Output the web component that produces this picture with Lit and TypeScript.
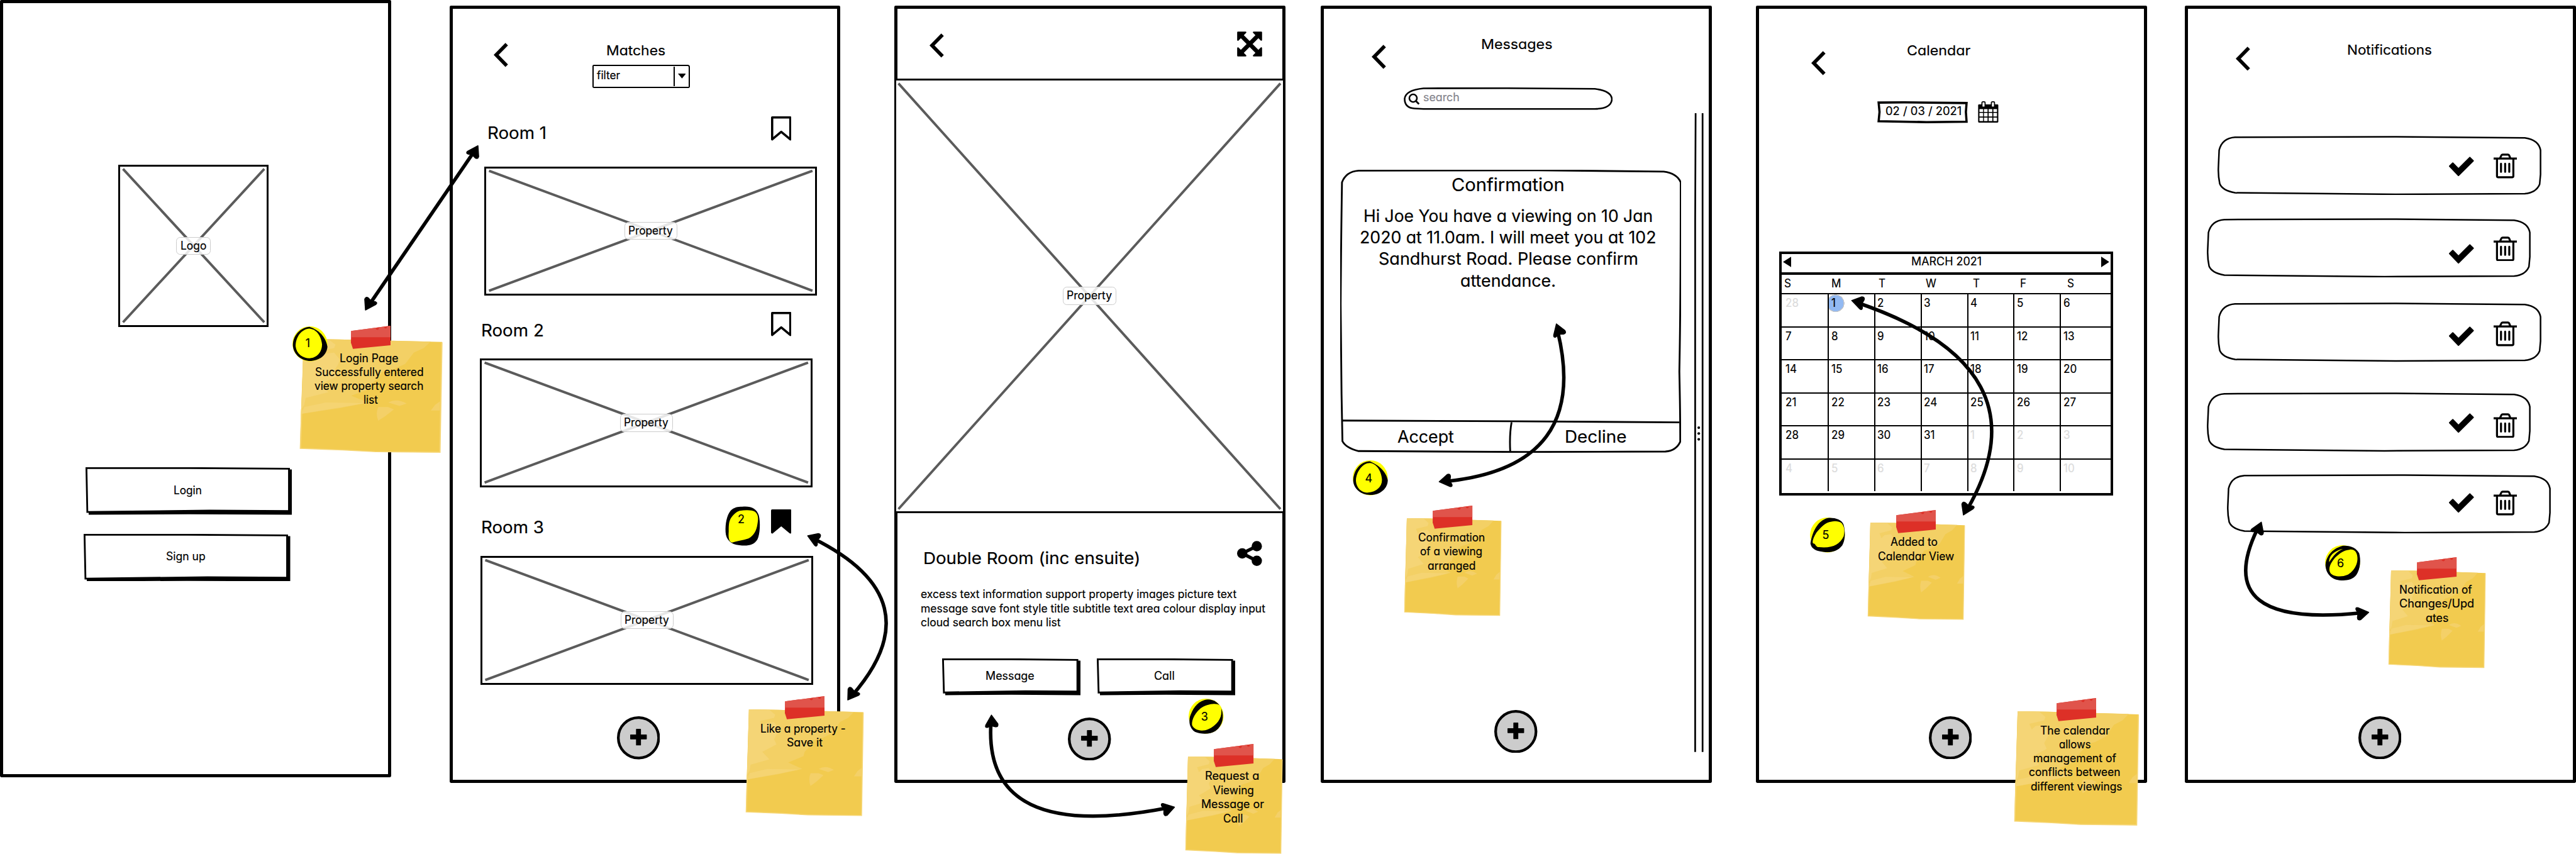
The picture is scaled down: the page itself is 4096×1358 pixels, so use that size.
import { LitElement, html, svg, css, nothing } from "lit";
import { customElement, property } from "lit/decorators.js";

/** One line of lettering, condensed horizontally to the hand-lettered width. */
@customElement("sk-text")
class SkText extends LitElement {
  @property({ type: Number }) w = 0;
  @property({ type: Number }) size = 25.2;
  @property({ type: Number }) line = 31.6;
  static styles = css`
    :host { display: block; flex: none; white-space: nowrap; }
    .run { display: inline-block; transform-origin: 0 50%; vertical-align: top; }
  `;
  render() {
    return html`<span class="run"><slot></slot></span>`;
  }
  updated() {
    const run = this.renderRoot.querySelector(".run") as HTMLElement;
    this.style.fontSize = `${this.size}px`;
    this.style.lineHeight = `${this.line}px`;
    run.style.transform = "none";
    if (!this.w) {
      run.style.transform = "scaleX(0.95)";
      return;
    }
    this.style.width = `${this.w}px`;
    const natural = run.getBoundingClientRect().width;
    const wanted = this.getBoundingClientRect().width;
    if (natural > 0) run.style.transform = `scaleX(${wanted / natural})`;
  }
}

/** Crossed-out picture placeholder with a caption chip. */
@customElement("wire-image")
class WireImage extends LitElement {
  @property({ type: Number }) w = 741;
  @property({ type: Number }) h = 287.4;
  @property() label = "Property";
  @property({ type: Number }) lw = 99;
  static styles = css`
    :host { display: block; flex: none; }
    .frame { display: grid; place-items: center; box-sizing: border-box; width: 100%; height: 100%; border: 5px solid #000; background: #fff; }
    .frame > * { grid-area: 1 / 1; }
    .chip { padding: 3px 8px 3px; border: 2px solid #ccc; border-radius: 9px; background: rgba(255, 255, 255, 0.85); z-index: 1; }
    svg { display: block; }
  `;
  render() {
    const w = this.w - 10, h = this.h - 10;
    return html`<div class="frame">
      <svg width=${w} height=${h} stroke="#5b5b5b" stroke-width="5.5">
        <path d="M5 5L${w - 5} ${h - 5}M${w - 5} 5L5 ${h - 5}"></path>
      </svg>
      <div class="chip"><sk-text .w=${this.lw}>${this.label}</sk-text></div>
    </div>`;
  }
  updated() {
    this.style.width = `${this.w}px`;
    this.style.height = `${this.h}px`;
  }
}

/** Hand-drawn push button with a heavy right and bottom edge. */
@customElement("wire-button")
class WireButton extends LitElement {
  @property({ type: Number }) w = 308.6;
  @property({ type: Number }) h = 82;
  @property() label = "";
  @property({ type: Number }) lw = 60;
  static styles = css`
    :host { display: block; flex: none; }
    .btn { display: grid; place-items: center; }
    .btn > * { grid-area: 1 / 1; }
    .label { padding: 0 6px 3px 0; }
    svg { display: block; }
  `;
  render() {
    const { w, h } = this;
    return html`<div class="btn">
      <svg width=${w} height=${h}>
        <path d="M7 ${h - 9}H${w - 9}V5H${w}V${h}L${w * 0.5} ${h - 1}L7 ${h}Z" fill="#000"></path>
        <path d="M2 2L${w * 0.5} 1.8L${w - 7} 3.4V${h - 8}L${w * 0.6} ${h - 9}L4 ${h - 6}Z" fill="#fff" stroke="#000" stroke-width="4"></path>
      </svg>
      <div class="label"><sk-text .w=${this.lw}>${this.label}</sk-text></div>
    </div>`;
  }
}

type Line = [text: string, width: number, shift?: number];

/** Taped yellow sticky note. */
@customElement("sticky-note")
class StickyNote extends LitElement {
  @property({ attribute: false }) lines: Line[] = [];
  @property({ type: Number }) w = 216;
  @property({ type: Number }) h = 216;
  @property({ type: Number }) pitch = 31.6;
  static styles = css`
    :host { display: block; }
    .note { position: relative; }
    .paper { position: absolute; inset: 0; width: 100%; height: 100%; overflow: visible; }
    .tape { position: absolute; top: -28.5px; left: calc(50% - 44.5px); }
    .words { position: relative; display: flex; flex-direction: column; align-items: center; padding: 28px 7px 0 0; }
  `;
  render() {
    return html`<div class="note" style="width:${this.w}px;height:${this.h}px">
      <svg class="paper" viewBox="0 0 100 100" preserveAspectRatio="none">
        <path d="M2.6 0L27 .4L100 2.7L98.4 100L53 99.3L30 97.8L0 96.4L.6 70Z" fill="#f2cb4f"></path>
        <path d="M2.6 0L27 .4L92 2.4L87 8L80 12L74 22L65 27L58 29L55 34L50 40L49 44L36 50L48 56L28 61L1 66L.6 70L1.6 40Z" fill="#f3d065"></path>
        <path d="M2.6 0L20 .4L25 5L24 8L12 11L14 16L17 13L24 12L28 18L27 22L24 28L26 33L14 40L20 47L4 52L3 58L1 62L1.6 40Z" fill="#f5d576"></path>
        <path d="M3 60L18 56L46 56.5L30 60L1 66Z" fill="#f5d576" opacity=".8"></path>
        <path d="M55 60L62 60L66 62L60 68L55 72Q53 66 55 60Z" fill="#f4d068"></path>
        <path d="M62 56Q68 52 75 57L70 59Z" fill="#f4d068"></path>
        <path d="M98.5 55L95 58L92 63L98.3 63Z" fill="#f4d068"></path>
        <path d="M1.2 62L.3 96.4L30 97.8L53 99.3L98.4 99.8L99.8 3" fill="none" stroke="#f6d675" stroke-width=".9"></path>
      </svg>
      <svg class="tape" width="89" height="52">
        <path d="M0.5 11.5L88.5 0V43.5L4.5 51.5L0 38Z" fill="#dd3027"></path>
        <path d="M0.5 11.5L88.5 0V25.5H0Z" fill="#e0544b"></path>
        <path d="M55 6q4-2 8-1q-1 4-4 4q-3 0-4-3zM74 3q3-2 7-1q-1 4-4 4q-2 0-3-3z" fill="#dd3027"></path>
      </svg>
      <div class="words">
        ${this.lines.map(([t, w, dx]) => html`<sk-text .w=${w} .line=${this.pitch} style="margin-left:${2 * (dx ?? 0)}px">${t}</sk-text>`)}
      </div>
    </div>`;
  }
}

const chevron = html`<svg class="back" width="32" height="54" fill="none" stroke="#000" stroke-width="8">
  <path d="M29 3L5.500 27L29 51"></path></svg>`;

const plus = html`<svg class="fab" width="96" height="96">
  <circle cx="48" cy="48" r="45" fill="#ccc" stroke="#000" stroke-width="6"></circle>
  <path d="M30.500 41.500h35v9h-35zM43.500 29h9v35h-9z" stroke="#000" stroke-width="2" stroke-linejoin="round"></path></svg>`;

const bookmark = (filled = false) => html`<svg width="45.500" height="54" stroke="#000" stroke-width="5" stroke-linejoin="round"
  fill=${filled ? "#000" : "none"}><path d="M2.500 2.500H43V51.300L22.700 34.500L2.500 51.300Z"></path></svg>`;

const expandIcon = html`<svg width="56" height="56" stroke="#000" stroke-linejoin="round">
  <path d="M9 9L47 47M47 9L9 47" stroke-width="9.500"></path>
  <path d="M2 2H19L2 19ZM54 2V19L37 2ZM2 54V37L19 54ZM54 54H37L54 37Z" stroke-width="3.500"></path></svg>`;

const shareIcon = html`<svg width="56" height="56"><path d="M43.500 12L11.500 28L43.500 44.500" fill="none" stroke="#000" stroke-width="7.500"></path>
  <circle cx="44" cy="12" r="11.500"></circle><circle cx="11.500" cy="28" r="11.500"></circle><circle cx="44" cy="44.500" r="11.500"></circle></svg>`;

const calendarIcon = html`<svg width="46" height="48">
  <path d="M2.500 7H43.500Q45.500 7 45.500 9V46Q45.500 47.500 43.500 47.500H2.500Q.5 47.500 .5 46V9Q.5 7 2.500 7Z"></path>
  <g fill="#fff"><path d="M3.500 17.500h8v6.500h-8zM13.500 17.500h8v6.500h-8zM24 17.500h8v6.500h-8zM34.500 17.500h8v6.500h-8z"></path>
  <path d="M3.500 26h8v8h-8zM13.500 26h8v8h-8zM24 26h8v8h-8zM34.500 26h8v8h-8z"></path>
  <path d="M3.500 36.500h8v7.500h-8zM13.500 36.500h8v7.500h-8zM24 36.500h8v7.500h-8zM34.500 36.500h8v7.500h-8z"></path></g>
  <g fill="#fff" stroke="#000" stroke-width="2.500"><rect x="9" y="1.300" width="7" height="12" rx="2"></rect><rect x="30" y="1.300" width="7" height="12" rx="2"></rect></g></svg>`;

const checkIcon = html`<svg width="56" height="44" stroke="#000" stroke-width="3" stroke-linejoin="round">
  <path d="M1.500 21.500L8.500 14.500L21.200 27.500L46.500 2L54 9.500L21.200 42Z"></path></svg>`;

const trashIcon = html`<svg width="52" height="56" fill="none" stroke="#000" stroke-width="4.500" stroke-linejoin="round">
  <path d="M0 11.500H52M14.500 10L17.500 4Q18.500 2.500 20 2.500H32Q33.500 2.500 34.500 4L37 10M7.500 11.500V50Q7.500 53 10.500 53H41Q44 53 44 50V11.500"></path>
  <path d="M16.500 23V41M25.700 23V41M34.900 23V41" stroke-linecap="round"></path></svg>`;

const badges = [
  { n: "1", x: 652, y: 727, tx: 34, ty: 38, black: "M38 1C20 2 1 18 1 42C2 64 22 78 42 77C62 75 76 64 78 46C76 32 66 10 38 1Z", inner: "M38 5C20 6 7 24 7 44C9 62 24 71 38 71C54 70 66 58 66 40C64 24 56 7 38 5Z", disc: true },
  { n: "2", x: 1616, y: 1128, tx: 36, ty: 29, black: "M38 1C56-1 70 4 75 20C79 36 78 62 72 74C64 88 48 89 32 87C12 86 2 74 1 58C0 38 4 20 12 10C20 2 28 1 38 1Z", inner: "M32 10C46 8 60 8 66 12C75 18 74 30 72 40C70 54 64 66 52 72C40 76 24 78 16 81C8 80 7 68 8 56C8 44 8 36 12 28C18 18 26 12 32 10Z" },
  { n: "3", x: 2650, y: 1557, tx: 35, ty: 41, black: "M35 3C50-1 66 6 73 22C80 40 76 60 60 72C48 80 28 80 14 74C2 66 0 52 3 40C8 24 18 8 35 3Z", inner: "M70 15C60 8 40 12 26 22C10 36 6 52 8 60C14 71 30 74 44 68C62 60 74 44 73 28C73 22 73 18 70 15Z", disc: true },
  { n: "4", x: 3016, y: 1026, tx: 35, ty: 40, black: "M38 2C18 2 1 22 1 46C2 64 20 78 40 77C62 77 78 62 78 44C76 32 66 14 38 2Z", inner: "M38 6C22 6 7 26 7 46C8 62 20 73 34 72C54 70 66 58 65 42C64 26 54 7 38 6Z", disc: true },
  { n: "5", x: 4035, y: 1154, tx: 34.500, ty: 39, black: "M40 1C56 0 70 4 75 16C79 30 79 50 72 62C62 75 48 78 34 77C14 76 3 70 1 58C4 36 16 6 40 1Z", inner: "M48 9C34 10 22 24 14 34C8 44 4 54 7 58C12 56 12 66 20 66C50 69 66 60 75 42C78 30 77 20 70 12C64 8 56 7 48 9Z", disc: true },
  { n: "6", x: 5182, y: 1215, tx: 35, ty: 41, black: "M40 1C56 0 70 6 76 18C80 32 79 52 70 66C60 79 44 79 32 78C12 76 1 60 1 44C2 26 14 8 40 1Z", inner: "M54 10C64 8 71 14 72 26C74 44 62 60 50 66C36 72 18 70 12 62C6 52 12 40 22 28C32 18 42 11 54 10ZM9 38C8 24 20 12 40 8C26 14 18 24 9 38Z", disc: true },
];

const notes: { x: number; y: number; w: number; h: number; lines: Line[]; pitch?: number }[] = [
  { x: 668, y: 755, w: 317, h: 253, lines: [["Login Page", 131], ["Successfully entered", 242], ["view property search", 243], ["list", 32, 3]], pitch: 31 },
  { x: 1663, y: 1581, w: 262, h: 237, lines: [["Like a property -", 190], ["Save it", 80, 3]] },
  { x: 2642.500, y: 1687, w: 216, h: 216, lines: [["Request a", 121], ["Viewing", 91, 2], ["Message or", 140], ["Call", 44, 2]] },
  { x: 3130.500, y: 1155, w: 216, h: 217, lines: [["Confirmation", 149], ["of a viewing", 139], ["arranged", 107]] },
  { x: 4163, y: 1165, w: 216, h: 216, lines: [["Added to", 105, -1], ["Calendar View", 170, 3]] },
  { x: 4490, y: 1585, w: 277, h: 254, lines: [["The calendar", 155], ["allows", 71], ["management of", 185], ["conflicts between", 204], ["different viewings", 204, 3]], pitch: 31.200 },
  { x: 5324.500, y: 1271, w: 216, h: 217, lines: [["Notification of", 162], ["Changes/Upd", 167, 3], ["ates", 51, 3]] },
];

const arrows = [
  { d: "M1056 339L824 678", a: [1066, 324, -55.600], b: [814, 692, 124.400] },
  { d: "M1812 1200Q2087 1336 1899 1551", a: [1799.500, 1194, 206.500], b: [1889, 1561, 130] },
  { d: "M2209 1610Q2190 1881 2602 1801", a: [2210, 1593, -88], b: [2619, 1799, -10] },
  { d: "M3472 738Q3546 1040 3224 1073", a: [3469, 721, -104], b: [3207, 1074, 176] },
  { d: "M4141 675Q4566 820 4386 1134", a: [4126.500, 669.500, 198.500], b: [4376, 1149, 120] },
  { d: "M5031 1181Q4925 1402 5264 1366", a: [5041, 1163, -63], b: [5281, 1365, -4] },
];

const arrowHead = ([x, y, deg]: number[]) =>
  svg`<path transform="translate(${x} ${y}) rotate(${deg})" d="M-1 0L-24 -12Q-30 -14 -29 -8L-25 0L-27 10Q-27 17 -20 15Z" stroke="#000" stroke-width="2" stroke-linejoin="round"/>`;

const dow = ["S", "M", "T", "W", "T", "F", "S"];
const days = [28, ...Array.from({ length: 31 }, (_, i) => i + 1), ...Array.from({ length: 10 }, (_, i) => i + 1)];

/** Left margin, top margin, tick left, tick top and bin top of each notification card. */
const cards = [
  [66, 145, 516, 46, 39],
  [42, 52, 540, 57, 40],
  [66, 56.500, 516, 53, 42],
  [42, 68.500, 540, 46, 45],
  [86.500, 49, 495.500, 42, 36.500],
];

@customElement("app-root")
class AppRoot extends LitElement {
  static styles = css`
    :host { display: block; width: 4096px; height: 1358px; overflow: hidden; background: #fff; color: #000;
      font-family: Inter, "Liberation Sans", sans-serif; font-weight: 400; font-feature-settings: "cv11" 1;
      -webkit-text-stroke: 0.3px currentColor; }
    svg { display: block; flex: none; }
    .board { position: relative; width: 5742px; height: 1904px; zoom: 0.71334; overflow: hidden; }
    .screens { display: flex; align-items: flex-start; }
    .screen { flex: none; display: flex; flex-direction: column; align-items: flex-start; box-sizing: border-box;
      width: 871.5px; height: 1733px; margin-top: 13px; border: 8px solid #000; border-radius: 3px; }
    .head { display: flex; align-items: flex-start; }

    .screen.login { margin-top: 0; }
    .login .logo { margin: 360px 0 0 257px; }
    .login .signin { margin: 313px 0 0 183.5px; }
    .login .signup { margin: 42px 0 0 179.5px; }

    .matches { margin-left: 130.5px; }
    .matches .head { padding: 73px 0 0 92px; gap: 187px; }
    .matches .back { margin-top: 3px; }
    .matches .heading { margin: 0 0 11px 31px; }
    .combo { display: flex; align-items: center; justify-content: space-between; box-sizing: border-box; width: 218px; height: 52px;
      padding-left: 7px; border: 4px solid #000; border-radius: 3px 5px 3px 3px; }
    .combo .drop { display: grid; place-items: center; width: 31px; height: 44px; border-left: 4px solid #000; }
    .combo sk-text { margin-bottom: 3px; }
    .room { display: flex; align-items: flex-start; justify-content: space-between; align-self: stretch; height: 54px; padding-right: 103px; }
    .room1 { margin-top: 64px; padding-left: 78px; }
    .room1 sk-text { margin-top: 15px; }
    .room2 { margin-top: 37px; padding-left: 64px; }
    .room2 sk-text { margin-top: 19px; }
    .room3 { margin-top: 49.5px; padding-left: 64px; }
    .room3 sk-text { margin-top: 18px; }
    .pic1 { margin: 57px 0 0 71px; }
    .pic2 { margin: 49.5px 0 0 61px; }
    .pic3 { margin: 49px 0 0 62.5px; }
    .matches .fab { margin: 71px 0 0 366px; }

    .detail { margin-left: 120.5px; }
    .detail .head { align-self: stretch; justify-content: space-between; box-sizing: border-box; height: 155.3px; padding: 49.5px 44.5px 0 70.7px; }
    .detail .back { margin-top: 5px; }
    .hero { margin-left: -8px; }
    .detail .titlebar { display: flex; align-items: flex-start; justify-content: space-between; align-self: stretch;
      margin-top: 60.7px; padding: 0 44.5px 0 57px; }
    .titlebar sk-text { margin-top: 17.4px; }
    .blurb { margin: 43.3px 0 0 51px; }
    .actions { display: flex; gap: 35.5px; margin: 63.4px 0 0 99.4px; }
    .detail .fab { margin: 48.8px 0 0 380px; }

    .messages { margin-left: 78.5px; }
    .messages .head { padding: 59px 0 0 106.4px; gap: 212px; }
    .messages .back { margin-top: 21px; }
    .search { display: grid; align-items: center; width: 466px; height: 50px; margin: 41px 0 0 178px; }
    .search > * { grid-area: 1 / 1; }
    .search sk-text { margin: 0 0 5px 43px; color: #85858d; }
    .feed { display: flex; margin-top: 7.5px; }
    .alert { display: grid; width: 760px; height: 631px; margin: 126px 0 0 36.5px; }
    .alert > * { grid-area: 1 / 1; }
    .alert .content { display: flex; flex-direction: column; align-items: center; padding-top: 11px; }
    .alert .copy { display: flex; flex-direction: column; align-items: center; margin-top: 21px; }
    .alert .content > sk-text, .alert .copy { margin-right: 11px; }
    .choices { display: grid; grid-template-columns: 1fr 1fr; justify-items: center; align-self: stretch; margin-top: auto; height: 58px; }
    .messages .fab { margin: 573px 0 0 380px; }
    .scroll { margin-left: 29.5px; }

    .agenda { margin-left: 98.5px; }
    .agenda .head { padding: 72.7px 0 0 116.6px; gap: 180.5px; }
    .agenda .back { margin-top: 21.3px; }
    .date { display: flex; align-items: flex-start; gap: 22.4px; margin: 57.5px 0 0 264px; }
    .datebox { display: grid; grid-template-columns: 202px; align-items: center; height: 49px; }
    .datebox > * { grid-area: 1 / 1; }
    .datebox sk-text { margin: 0 0 3px 18.5px; }
    .month { box-sizing: border-box; width: 745.2px; height: 543.5px; margin: 286.5px 0 0 44.3px; border: 6px solid #000; }
    .monthbar { display: flex; justify-content: space-between; height: 40px; padding: 0 3px; border-bottom: 6px solid #000; }
    .monthbar svg { margin-top: 6px; }
    .dow { display: grid; grid-template-columns: repeat(7, 105.1px); height: 41.2px; padding-left: 6px; }
    .days { display: grid; grid-template-columns: 103.1px repeat(5, 103.5px) 1fr; grid-auto-rows: 73.6px; }
    .day { display: flex; align-items: flex-start; padding-left: 5px; border-top: 3.6px solid #000; border-left: 3.6px solid #000; }
    .day.first { border-left: none; padding-left: 9px; }
    .day.out { color: #dcdcdc; }
    .day.today { background: radial-gradient(circle at 15px 20px, #92b9f2 17.5px, #c4c6ca 18px 19.4px, transparent 19.8px); }
    .agenda .fab { margin: 491.8px 0 0 378px; }

    .alerts { margin-left: 84.5px; }
    .alerts .head { padding: 71.7px 0 0 106.4px; gap: 216px; }
    .alerts .back { margin-top: 11.8px; }
    .card { display: grid; width: 722px; height: 132px; }
    .card > * { grid-area: 1 / 1; }
    .tools { display: flex; align-items: flex-start; gap: 43.4px; }
    .alerts .fab { margin: 407.8px 0 0 380px; }

    /* Annotations pinned on the canvas */
    .pin { position: absolute; }
    .badge { display: grid; }
    .badge > svg { grid-area: 1 / 1; overflow: visible; }
    .badge .num { grid-area: 1 / 1; line-height: 30px; font-size: 25.2px; width: 30px; height: 30px; text-align: center; }
    .arrows { position: absolute; inset: 0; pointer-events: none; }
  `;

  private heading(text: string, w: number) {
    return html`<sk-text class="heading" .w=${w} .size=${31} .line=${40}>${text}</sk-text>`;
  }

  private roomRow(n: number, w: number, saved = false) {
    return html`<div class="room room${n}">
      <sk-text .w=${w} .size=${37} .line=${44}>Room ${n}</sk-text>${bookmark(saved)}
    </div>`;
  }

  private loginScreen() {
    return html`<section class="screen login">
      <wire-image class="logo" .w=${335} .h=${362} label="Logo" .lw=${58}></wire-image>
      <wire-button class="signin" .w=${460.5} .h=${105.7} label="Login" .lw=${63}></wire-button>
      <wire-button class="signup" .w=${460.5} .h=${105.7} label="Sign up" .lw=${88}></wire-button>
    </section>`;
  }

  private matchesScreen() {
    return html`<section class="screen matches">
      <div class="head">${chevron}
        <div>
          ${this.heading("Matches", 132)}
          <div class="combo"><sk-text .w=${52}>filter</sk-text>
            <div class="drop"><svg width="18" height="11"><path d="M0 0H18L9 11Z"></path></svg></div>
          </div>
        </div>
      </div>
      ${this.roomRow(1, 132)}
      <wire-image class="pic1"></wire-image>
      ${this.roomRow(2, 140)}
      <wire-image class="pic2"></wire-image>
      ${this.roomRow(3, 140, true)}
      <wire-image class="pic3"></wire-image>
      ${plus}
    </section>`;
  }

  private detailScreen() {
    return html`<section class="screen detail">
      <div class="head">${chevron}${expandIcon}</div>
      <wire-image class="hero" .w=${871.5} .h=${969} .lw=${101}></wire-image>
      <div class="titlebar">
        <sk-text .w=${484} .size=${36.5} .line=${44}>Double Room (inc ensuite)</sk-text>${shareIcon}
      </div>
      <div class="blurb">
        <sk-text .w=${704} .line=${31.7}>excess text information support property images picture text</sk-text>
        <sk-text .w=${768} .line=${31.7}>message save font style title subtitle text area colour display input</sk-text>
        <sk-text .w=${312} .line=${31.7}>cloud search box menu list</sk-text>
      </div>
      <div class="actions">
        <wire-button label="Message" .lw=${109}></wire-button>
        <wire-button label="Call" .lw=${46}></wire-button>
      </div>
      ${plus}
    </section>`;
  }

  private messagesScreen() {
    const body = (t: string, w: number) => html`<sk-text .w=${w} .size=${37} .line=${48.2}>${t}</sk-text>`;
    return html`<section class="screen messages">
      <div class="head">${chevron}${this.heading("Messages", 159)}</div>
      <div class="search">
        <svg width="466" height="50" fill="none" stroke="#000" stroke-width="3.600">
          <path d="M44 2L230 1.800L426 3.200Q464 8 464 27Q462 47 426 48L44 48L24 47Q2 46 2 25Q4 6 44 2Z"></path>
          <circle cx="21" cy="24" r="8.500"></circle><path d="M27 30L34 37" stroke-width="4"></path>
        </svg>
        <sk-text .w=${81}>search</sk-text>
      </div>
      <div class="feed">
        <div>
          <div class="alert">
            <svg width="760" height="631" fill="none" stroke="#000" stroke-width="4">
              <path d="M40 2L440 1L720 4Q750 8 758 28Q758 300 755 450Q757 540 757 606Q748 626 724 628L400 629L40 627Q12 620 4 605L2 500L0 300Q1 150 3 28Q12 4 40 2Z" transform="translate(1 0)"></path>
              <path d="M3 559L380 560.500L756 563M382 563Q377 590 379 628"></path>
            </svg>
            <div class="content">
              <sk-text .w=${252} .size=${40} .line=${46}>Confirmation</sk-text>
              <div class="copy">
                ${body("Hi Joe You have a viewing on 10 Jan", 645)}
                ${body("2020 at 11.0am. I will meet you at 102", 661)}
                ${body("Sandhurst Road. Please confirm", 579)}
                ${body("attendance.", 213)}
              </div>
              <div class="choices">
                <sk-text .w=${126} .size=${37} .line=${44}>Accept</sk-text>
                <sk-text .w=${138} .size=${37} .line=${44}>Decline</sk-text>
              </div>
            </div>
          </div>
          ${plus}
        </div>
        <svg class="scroll" width="24" height="1424" fill="none" stroke="#000" stroke-width="3.800">
          <path d="M3 0L2 240V1424M18.500 0V1424"></path>
          <g fill="#000" stroke="none"><circle cx="10" cy="701" r="3"></circle><circle cx="10" cy="714" r="3"></circle><circle cx="10" cy="727" r="3"></circle></g>
        </svg>
      </div>
    </section>`;
  }

  private agendaScreen() {
    return html`<section class="screen agenda">
      <div class="head">${chevron}${this.heading("Calendar", 142)}</div>
      <div class="date">
        <div class="datebox">
          <svg width="202" height="49"><path d="M3 3L60 2.500L199 4L197.500 24L199 45.500L110 46.500L3 44.500L5 24Z" fill="none" stroke="#000" stroke-width="5"></path></svg>
          <sk-text .w=${170}>02 / 03 / 2021</sk-text>
        </div>
        ${calendarIcon}
      </div>
      <div class="month">
        <div class="monthbar">
          <svg width="19" height="24"><path d="M0 12L19 0V24Z"></path></svg>
          <sk-text .w=${157} .line=${34}>MARCH 2021</sk-text>
          <svg width="18" height="24"><path d="M18 12L0 0V24Z"></path></svg>
        </div>
        <div class="dow">${dow.map((d) => html`<sk-text .line=${40}>${d}</sk-text>`)}</div>
        <div class="days">
          ${days.map((d, i) => {
            const out = i === 0 || i > 31;
            return html`<div class="day ${i % 7 === 0 ? "first" : ""} ${out ? "out" : ""} ${i === 1 ? "today" : ""}">
              <sk-text .line=${38}>${d}</sk-text>
            </div>`;
          })}
        </div>
      </div>
      ${plus}
    </section>`;
  }

  private alertsScreen() {
    return html`<section class="screen alerts">
      <div class="head">${chevron}${this.heading("Notifications", 189)}</div>
      ${cards.map(([ml, mt, tickX, tickY, binY]) => html`<div class="card" style="margin:${mt}px 0 0 ${ml}px">
        <svg width="722" height="132" fill="none" stroke="#000" stroke-width="3.500">
          <path d="M39 3L396 2L685 4.500Q716 9 720 32V86L718 108Q710 127 685 129L396 130.300L39 127Q11 122 5 107Q1 88 2 69L3.600 32Q10 5 39 3Z"></path>
        </svg>
        <div class="tools" style="padding-left:${tickX}px">
          <div style="padding-top:${tickY}px">${checkIcon}</div>
          <div style="padding-top:${binY}px">${trashIcon}</div>
        </div>
      </div>`)}
      ${plus}
    </section>`;
  }

  render() {
    return html`<main class="board">
      <div class="screens">
        ${this.loginScreen()}${this.matchesScreen()}${this.detailScreen()}
        ${this.messagesScreen()}${this.agendaScreen()}${this.alertsScreen()}
      </div>
      ${notes.map((n) => html`<sticky-note class="pin" style="left:${n.x}px;top:${n.y}px"
        .w=${n.w} .h=${n.h} .lines=${n.lines} .pitch=${n.pitch ?? 31.6}></sticky-note>`)}
      ${badges.map((b) => html`<div class="pin badge" style="left:${b.x}px;top:${b.y}px">
        <svg width="79" height="88">
          ${b.disc ? svg`<circle cx="39" cy="39" r="39" fill="#ff0"/>` : nothing}
          <path d=${b.black}></path><path d=${b.inner} fill="#ff0"></path>
        </svg>
        <span class="num" style="margin:${b.ty - 15}px 0 0 ${b.tx - 15}px">${b.n}</span>
      </div>`)}
      <svg class="arrows" width="5742" height="1904">
        ${arrows.map((a) => svg`<path d=${a.d} fill="none" stroke="#000" stroke-width="7.800"/>${arrowHead(a.a)}${arrowHead(a.b)}`)}
      </svg>
    </main>`;
  }
}
